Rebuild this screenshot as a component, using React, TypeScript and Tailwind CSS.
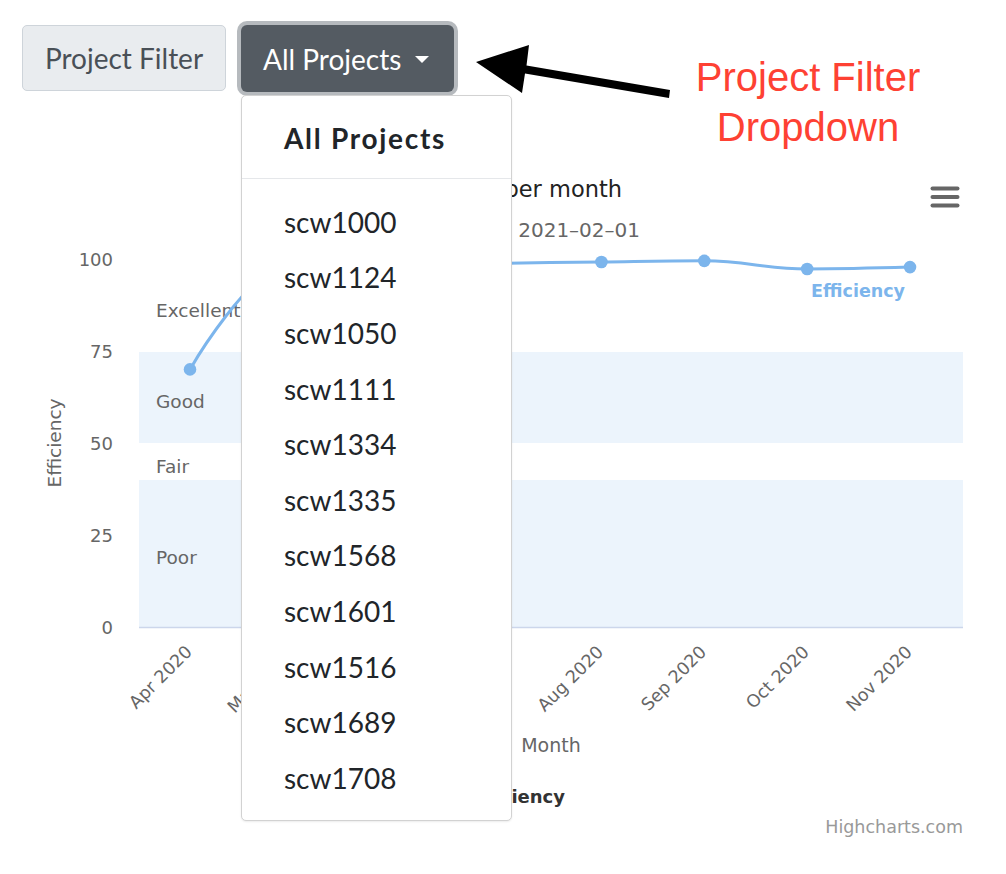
import React from "react";

type Pt = { x: number; y: number };

const months = ["Apr 2020", "May 2020", "Jun 2020", "Jul 2020", "Aug 2020", "Sep 2020", "Oct 2020", "Nov 2020"];
const values = [70, 99, 98.3, 98.8, 99.2, 99.5, 97.3, 97.8];
const yOf = (v: number) => 626 - v * 3.68;
const pts: Pt[] = values.map((v, i) => ({ x: 190 + i * 102.86, y: yOf(v) }));

function splinePath(p: Pt[]): string {
  const s = 1.5;
  const d = 2.5;
  const ctrl = p.map((pt, i) => {
    if (i === 0 || i === p.length - 1) return { lx: pt.x, ly: pt.y, rx: pt.x, ry: pt.y };
    const a = p[i - 1];
    const b = p[i + 1];
    let lx = (s * pt.x + a.x) / d;
    let ly = (s * pt.y + a.y) / d;
    const rx = (s * pt.x + b.x) / d;
    let ry = (s * pt.y + b.y) / d;
    if (rx !== lx) {
      const c = ((ry - ly) * (rx - pt.x)) / (rx - lx) + pt.y - ry;
      ly += c;
      ry += c;
    }
    if (ly > a.y && ly > pt.y) {
      ly = Math.max(a.y, pt.y);
      ry = 2 * pt.y - ly;
    } else if (ly < a.y && ly < pt.y) {
      ly = Math.min(a.y, pt.y);
      ry = 2 * pt.y - ly;
    }
    if (ry > b.y && ry > pt.y) {
      ry = Math.max(b.y, pt.y);
      ly = 2 * pt.y - ry;
    } else if (ry < b.y && ry < pt.y) {
      ry = Math.min(b.y, pt.y);
      ly = 2 * pt.y - ry;
    }
    return { lx, ly, rx, ry };
  });
  let path = `M ${p[0].x} ${p[0].y}`;
  for (let i = 1; i < p.length; i++) {
    path += ` C ${ctrl[i - 1].rx} ${ctrl[i - 1].ry} ${ctrl[i].lx} ${ctrl[i].ly} ${p[i].x} ${p[i].y}`;
  }
  return path;
}

const projects = [
  "scw1000",
  "scw1124",
  "scw1050",
  "scw1111",
  "scw1334",
  "scw1335",
  "scw1568",
  "scw1601",
  "scw1516",
  "scw1689",
  "scw1708",
];

const chartFont = "'DejaVu Sans', Verdana, sans-serif";

function Chart() {
  return (
    <svg width={1006} height={770} viewBox="0 91 1006 770" className="block" style={{ fontFamily: chartFont }}>
      {/* plot bands */}
      <rect x={139} y={351} width={824} height={91} fill="#ecf4fc" />
      <rect x={139} y={479} width={824} height={147} fill="#ecf4fc" />
      {/* axis line */}
      <line x1={139} y1={626.5} x2={963} y2={626.5} stroke="#ccd6eb" strokeWidth={1.5} />

      {/* title */}
      <text x={622} y={196} textAnchor="end" fontSize={22.5} fill="#222">
        Efficiency per month
      </text>
      <text x={640} y={236} textAnchor="end" fontSize={20} fill="#666">
        2021–02–01
      </text>

      {/* hamburger */}
      <g stroke="#666" strokeWidth={4} strokeLinecap="round">
        <line x1={932.5} y1={187.5} x2={957.5} y2={187.5} />
        <line x1={932.5} y1={196} x2={957.5} y2={196} />
        <line x1={932.5} y1={204.5} x2={957.5} y2={204.5} />
      </g>

      {/* y labels */}
      <g fontSize={18} fill="#666" textAnchor="end">
        {[100, 75, 50, 25, 0].map((v) => (
          <text key={v} x={113} y={yOf(v) + 6.5}>
            {v}
          </text>
        ))}
      </g>

      {/* y axis title */}
      <text
        x={61}
        y={442}
        fontSize={18.5}
        fill="#666"
        textAnchor="middle"
        transform="rotate(-90 61 442)"
      >
        Efficiency
      </text>

      {/* band labels */}
      <g fontSize={18.5} fill="#666">
        <text x={156} y={316}>Excellent</text>
        <text x={156} y={407}>Good</text>
        <text x={156} y={472}>Fair</text>
        <text x={156} y={563}>Poor</text>
      </g>

      {/* series */}
      <path d={splinePath(pts)} fill="none" stroke="#7cb5ec" strokeWidth={3} />
      {pts.map((p, i) => (
        <circle key={i} cx={p.x} cy={p.y} r={6.3} fill="#7cb5ec" />
      ))}
      <text x={905} y={296} textAnchor="end" fontSize={17.5} fontWeight="bold" fill="#7cb5ec">
        Efficiency
      </text>

      {/* x labels */}
      <g fontSize={17.5} fill="#666" textAnchor="end">
        {months.map((m, i) => {
          const x = pts[i].x + 3;
          const y = 652;
          return (
            <text key={m} x={x} y={y} transform={`rotate(-45 ${x} ${y})`}>
              {m}
            </text>
          );
        })}
      </g>

      {/* x axis title */}
      <text x={551} y={751} textAnchor="middle" fontSize={19} fill="#666">
        Month
      </text>

      {/* legend */}
      <g>
        <line x1={430} y1={796} x2={452} y2={796} stroke="#7cb5ec" strokeWidth={3} />
        <circle cx={441} cy={796} r={5} fill="#7cb5ec" />
        <text x={565} y={802} textAnchor="end" fontSize={18} fontWeight="bold" fill="#333">
          Efficiency
        </text>
      </g>

      {/* credits */}
      <text x={963} y={832} textAnchor="end" fontSize={17.5} fill="#999">
        Highcharts.com
      </text>
    </svg>
  );
}

export default function App() {
  return (
    <div className="relative w-[1006px] min-h-[874px] bg-white overflow-hidden" style={{ fontFamily: "Lato, 'Noto Sans', sans-serif" }}>
      {/* top controls */}
      <div className="flex items-start gap-[15px] pl-[22px] pt-[25px]">
        <div className="flex h-[66px] w-[204px] items-center justify-center rounded-[5px] border border-[#ced4da] bg-[#e9ecef] text-[28px] text-[#495057]">
          Project Filter
        </div>
        <div className="relative">
          <button
            type="button"
            className="flex h-[67px] w-[213px] items-center rounded-[6px] bg-[#545b62] pl-[22px] pr-[24px] text-[28px] text-white shadow-[0_0_0_4px_#b6babe]"
          >
            <span>All Projects</span>
            <span className="ml-[14px] mt-[2px] h-0 w-0 border-x-[7px] border-t-[7px] border-x-transparent border-t-white" />
          </button>
          {/* dropdown menu */}
          <div className="absolute left-0 top-[70px] z-10 w-[271px] rounded-[5px] border border-[#d2d2d2] bg-white pb-[14px] pt-[14px] shadow-[0_1px_2px_rgba(0,0,0,0.08)]">
            <div className="flex h-[56px] items-center pl-[42px] text-[28px] font-bold tracking-[1.7px] text-[#212529]">
              All Projects
            </div>
            <div className="mb-[15px] mt-[12px] h-px bg-[#e5e7ea]" />
            {projects.map((p) => (
              <div key={p} className="flex h-[55.6px] items-center pl-[42px] text-[28px] text-[#212529]">
                {p}
              </div>
            ))}
          </div>
        </div>
      </div>

      <Chart />

      {/* annotation arrow */}
      <svg className="absolute left-0 top-0 pointer-events-none" width={1006} height={160}>
        <polygon
          points="476,62 529,45 526.5,65.5 670,90 669,98 525,73.5 522,93"
          fill="#000"
        />
      </svg>
      <div
        className="absolute left-[658px] top-[52px] w-[300px] text-center text-[40px] leading-[50px] text-[#fe4133]"
        style={{ fontFamily: "'Liberation Sans', Arial, sans-serif" }}
      >
        Project Filter
        <br />
        Dropdown
      </div>
    </div>
  );
}
